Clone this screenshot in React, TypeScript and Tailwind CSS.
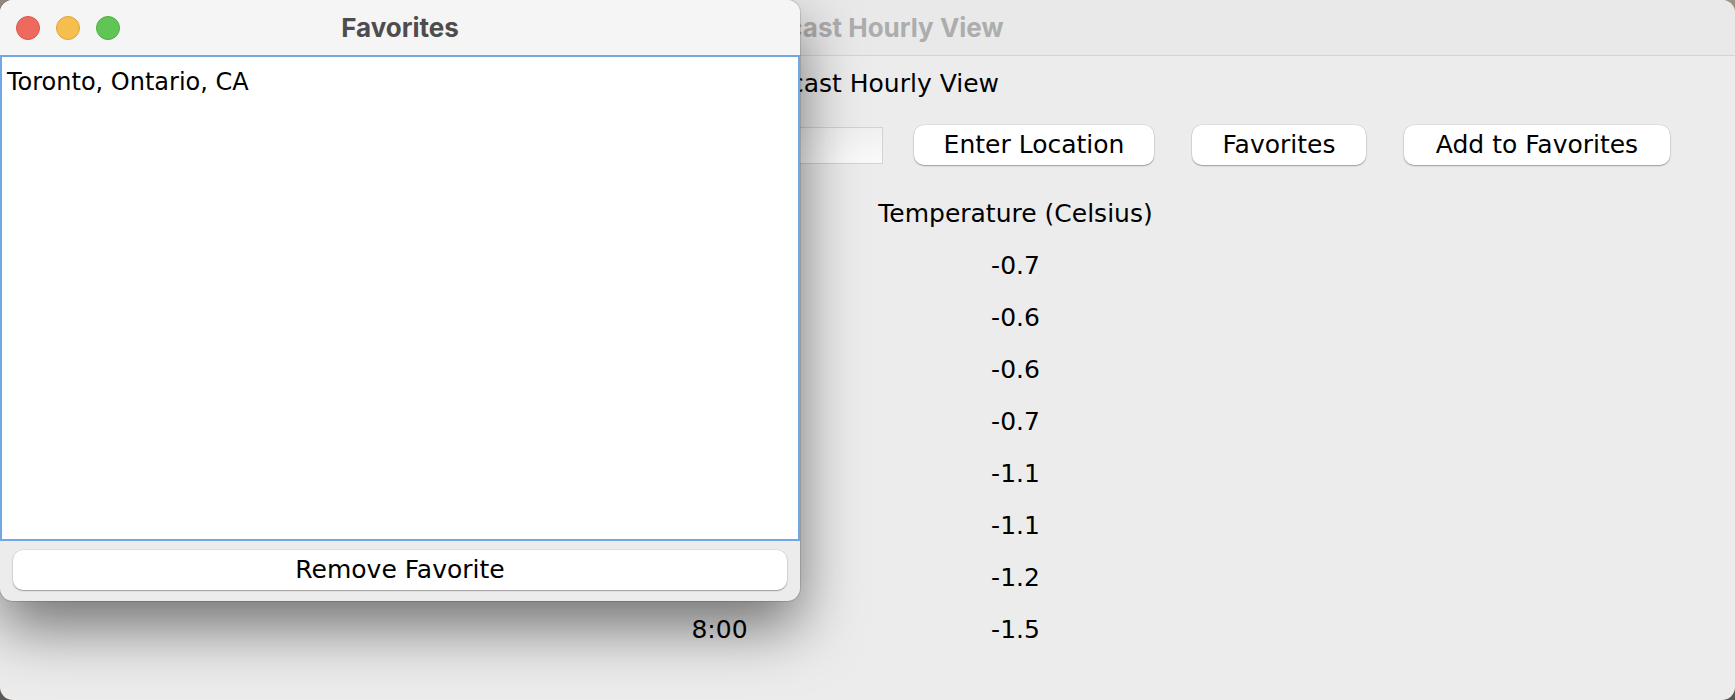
import React from "react";

const hours = ["Time", "1:00", "2:00", "3:00", "4:00", "5:00", "6:00", "7:00", "8:00"];
const temps = ["Temperature (Celsius)", "-0.7", "-0.6", "-0.6", "-0.7", "-1.1", "-1.1", "-1.2", "-1.5"];

const body = { fontFamily: '"DejaVu Sans", "Liberation Sans", sans-serif' };
const title = { fontFamily: 'Inter, Roboto, "Liberation Sans", sans-serif' };

function MacButton({ label, className }: { label: string; className?: string }) {
  return (
    <button
      className={`h-[40px] rounded-[10px] bg-white text-[25px] text-black shadow-[0_1px_1.5px_rgba(0,0,0,0.3),0_0_0_0.5px_rgba(0,0,0,0.1)] ${className ?? ""}`}
      style={body}
    >
      {label}
    </button>
  );
}

function TrafficLights() {
  return (
    <div className="absolute left-[16px] top-[16px] flex gap-[16px]">
      <span className="h-[24px] w-[24px] rounded-full border border-[#e0534a] bg-[#ee6a5f]" />
      <span className="h-[24px] w-[24px] rounded-full border border-[#e0a63a] bg-[#f5be4f]" />
      <span className="h-[24px] w-[24px] rounded-full border border-[#4fae43] bg-[#61c555]" />
    </div>
  );
}

export default function App() {
  return (
    <div className="relative h-[700px] w-[1735px] overflow-hidden bg-gradient-to-b from-[#9a9283] to-[#5c5855]">
      {/* main window */}
      <div className="flex h-full w-full flex-col overflow-hidden rounded-[13px] bg-[#ececec]">
        <div className="flex h-[56px] shrink-0 items-center justify-center border-b border-[#d4d4d4] bg-[#e9e9e9]">
          <span className="text-[26px] font-bold text-[#adadad]" style={title}>
            Forecast Hourly View
          </span>
        </div>
        <div className="flex h-[55px] items-center justify-center text-[25px] text-black" style={body}>
          Forecast Hourly View
        </div>
        <div className="mt-[14px] flex items-center justify-center">
          <div className="h-[37px] w-[818px] border border-[#d2d2d2] bg-gradient-to-b from-[#f0f0f0] to-[#fafafa]" />
          <MacButton label="Enter Location" className="ml-[31px] w-[240px]" />
          <MacButton label="Favorites" className="ml-[38px] w-[174px]" />
          <MacButton label="Add to Favorites" className="ml-[38px] w-[266px]" />
        </div>
        <div className="mt-[23px] grid grid-cols-[296px_296px] justify-center text-[25px] text-black" style={body}>
          {hours.map((h, i) => (
            <React.Fragment key={i}>
              <div className="flex h-[52px] items-center justify-center">{h}</div>
              <div className="flex h-[52px] items-center justify-center">{temps[i]}</div>
            </React.Fragment>
          ))}
        </div>
      </div>

      {/* favorites window */}
      <div className="absolute left-0 top-0 flex h-[601px] w-[800px] flex-col overflow-hidden rounded-[13px] bg-[#ececec] shadow-[0_26px_60px_rgba(0,0,0,0.52),0_0_0_1px_rgba(0,0,0,0.12)]">
        <div className="relative flex h-[55px] shrink-0 items-center justify-center bg-[#f5f5f5]">
          <TrafficLights />
          <span className="text-[26px] font-bold text-[#4d4d4d]" style={title}>
            Favorites
          </span>
        </div>
        <div className="h-[486px] shrink-0 border-2 border-[#72a7e6] bg-white px-[5px] pt-[7px] text-[24px] text-black" style={body}>
          Toronto, Ontario, CA
        </div>
        <div className="px-[13px] pt-[9px]">
          <MacButton label="Remove Favorite" className="w-full" />
        </div>
      </div>
    </div>
  );
}
